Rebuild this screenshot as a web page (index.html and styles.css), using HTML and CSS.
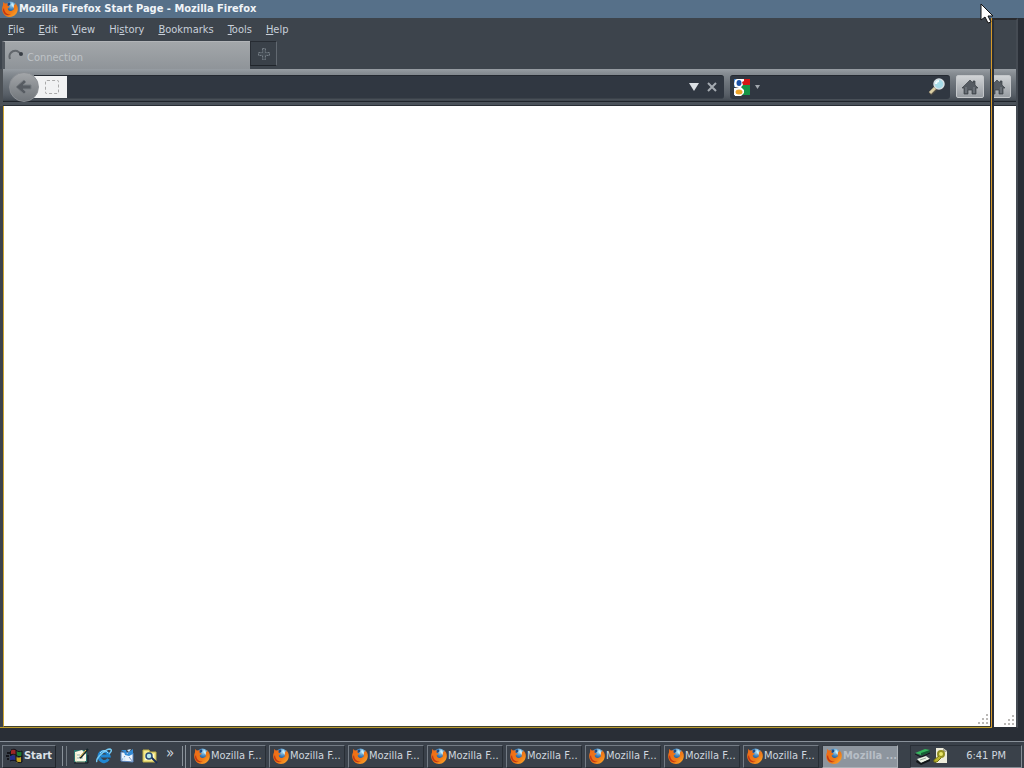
FILE: index.html
```html
<!DOCTYPE html>
<html lang="en">
<head>
  <meta charset="UTF-8">
  <title>Mozilla Firefox Start Page - Mozilla Firefox</title>
  <meta name="viewport" content="width=device-width,initial-scale=1">
  <link rel="stylesheet" href="styles.css">
</head>
<body>
  <svg class="defs" aria-hidden="true">
    <defs>
      <radialGradient id="globe" cx=".6" cy=".25" r=".8"><stop offset="0" stop-color="#b5e5f7"/><stop offset=".5" stop-color="#397ebb"/><stop offset="1" stop-color="#142c61"/></radialGradient>
      <linearGradient id="fur" x2="1" y2="1"><stop offset="0" stop-color="#f06a16"/><stop offset=".6" stop-color="#ee7918"/><stop offset="1" stop-color="#ffb02e"/></linearGradient>
      <symbol id="firefox" viewBox="0 0 16 16">
        <circle cx="8.5" cy="6.5" r="6" fill="url(#globe)"/>
        <path d="M6 2c2-1 3 0 2 2L6 5 5 4z" fill="#1c4a86"/>
        <path d="M10 2c2 1 3 3 2 5l-2-2z" fill="#c5ecfa"/>
        <path d="M1.200 1 2.800 2.500l2.800-.2L5.500 4.700l2.400 1.100-2.200 1.400c.2 2 1.500 3 3.400 2.700l2.500-1.200L12 3.500l1.400.8-.7-2.200C15 3.500 16 6 15.800 8.600 15.400 13 12 16 8 16 3.500 16 .2 12.500.2 8.200c0-2 .3-2.600.8-4z" fill="url(#fur)"/>
        <path d="M2 7c.1 4 3 7 6.800 6.500-4.200 2-8-.8-7.800-5z" fill="#c63712"/>
      </symbol>
      <symbol id="home" viewBox="0 0 18 16">
        <path d="M9 1 1 9h2v6h4v-4h4v4h4V9h2l-3-3V2h-2v2z" fill="#555b62" stroke="#3b4046" stroke-width=".7"/>
        <path d="M5 8v6M13 8v6" stroke="#7e848a"/>
      </symbol>
      <symbol id="grip" viewBox="0 0 12 12">
        <path d="M9 1h2v2H9zM5 5h2v2H5zM9 5h2v2H9zM1 9h2v2H1zM5 9h2v2H5zM9 9h2v2H9z" fill="#bbb9b7"/>
      </symbol>
    </defs>
  </svg>

  <header class="titlebar">
    <svg class="icon"><use href="#firefox"/></svg>
    <h1>Mozilla Firefox Start Page - Mozilla Firefox</h1>
  </header>

  <main class="desktop">
    <section class="window">
      <nav class="menu">
        <a href="#"><u>F</u>ile</a>
        <a href="#"><u>E</u>dit</a>
        <a href="#"><u>V</u>iew</a>
        <a href="#">Hi<u>s</u>tory</a>
        <a href="#"><u>B</u>ookmarks</a>
        <a href="#"><u>T</u>ools</a>
        <a href="#"><u>H</u>elp</a>
      </nav>
      <div class="tabs">
        <button class="tab" type="button">
          <svg class="spinner" viewBox="0 0 16 16"><path d="M2 11C0 6 4 2 9 3l3 2" fill="none" stroke="#62676c" stroke-width="2"/><circle cx="13" cy="6" r="2" fill="#383e45"/></svg>
          <span>Connection</span>
        </button>
        <button class="newtab" type="button" aria-label="New tab">
          <svg width="14" height="14" viewBox="0 0 14 14"><path d="M5.500 1.500h3v4h4v3h-4v4h-3v-4h-4v-3h4z" fill="#444c54" stroke="#747d85" stroke-dasharray="2 1"/></svg>
        </button>
      </div>
      <div class="toolbar">
        <button class="back" type="button" aria-label="Back">
          <svg width="18" height="16" viewBox="0 0 18 16"><path d="M1 8 9 1l2 2-3 3h8v4H8l3 3-2 2z" fill="#575c62" stroke="#777c81"/></svg>
        </button>
        <div class="address">
          <span class="identity"><span class="blank"></span></span>
          <input type="text" aria-label="Address">
          <button type="button" aria-label="Show history"><svg width="12" height="12" viewBox="0 0 12 12"><path d="M1 2h10L6 10z" fill="#dce0e4"/></svg></button>
          <button type="button" aria-label="Stop"><svg width="12" height="12" viewBox="0 0 12 12"><path d="m2 2 8 8M10 2l-8 8" stroke="#a5abb1" stroke-width="2"/></svg></button>
        </div>
        <div class="search">
          <button class="engine" type="button" aria-label="Search engine">
            <svg width="17" height="18" viewBox="0 0 17 18">
              <path d="M1 1h9v8H1z" fill="#3b7fcf"/><path d="M9 1h8v6H9z" fill="#d51616"/><path d="M9 7h8v10H9z" fill="#159447"/><path d="M1 10h6v7H1z" fill="#f5f8fb"/>
              <path d="M4 1h7v2L9 4l1 3-2 2 3 3v3l-3 3H2l-1-3 1-3 4-2-4-1-1-3 1-4z" fill="#fff"/>
              <ellipse cx="6" cy="5" rx="2.500" ry="3" fill="#1b52a7"/>
              <ellipse cx="6" cy="14" rx="3.500" ry="2.500" fill="#eda329"/>
            </svg>
            <svg width="5" height="4" viewBox="0 0 5 4"><path d="M0 0h5L2.500 4z" fill="#a2a8ae"/></svg>
          </button>
          <input type="text" aria-label="Search">
          <button type="button" aria-label="Search the web">
            <svg width="18" height="18" viewBox="0 0 18 18"><path d="m2 16 6-6" stroke="#514d45" stroke-width="4"/><path d="m2 15 5-5" stroke="#d9cda3" stroke-width="3"/><circle cx="11" cy="6" r="5" fill="#a5dbe8" stroke="#d7e0e5" stroke-width="1.500"/><path d="M8 6c0-2 1-3 3-3" stroke="#effcff" stroke-width="2" fill="none"/></svg>
          </button>
        </div>
        <button class="home" type="button" aria-label="Home"><svg width="18" height="16"><use href="#home"/></svg></button>
      </div>
      <div class="page"><svg class="grip"><use href="#grip"/></svg></div>
    </section>

    <!-- window underneath, only its right edge shows -->
    <section class="window behind">
      <div class="menu"></div>
      <div class="tabs"></div>
      <div class="toolbar">
        <button class="home" type="button" aria-label="Home"><svg width="18" height="16"><use href="#home"/></svg></button>
      </div>
      <div class="page"><svg class="grip"><use href="#grip"/></svg></div>
    </section>
  </main>

  <footer class="taskbar">
    <button class="start" type="button">
      <svg width="17" height="16" viewBox="0 0 17 16"><path d="M1 4h3v2H1zM0 7h3v2H0zM1 10h2v2H1zM4 3h2v10H4z" fill="#14151a"/><path d="M5 2c2-1 4-1 5 0v5C8 6 7 6 5 7z" fill="#9d2527"/><path d="M11 3c2 1 3 1 5 0v5c-2 1-3 1-5 0z" fill="#1d7b31"/><path d="M4 8c2-1 4-1 5 0v5c-2-1-3-1-5 0z" fill="#242d8c"/><path d="M10 9c2 1 3 1 5 0v5c-2 1-3 1-5 0z" fill="#c4a11f"/><path d="M5 2c2-1 4-1 5 0 2 2 4 2 6 1v11c-2 1-4 1-6-1-2-1-4-1-6 0M10 2v11M4 7c3-1 4-1 6 0 2 2 4 2 6 1" fill="none" stroke="#111217"/></svg>
      Start
    </button>
    <div class="quick">
      <button type="button" aria-label="Show desktop"><svg viewBox="0 0 16 16"><path d="M1 2h13v12H1z" fill="#2b7770"/><path d="M2 4 9 2l4 4v7H2z" fill="#fbf8e6"/><path d="M4 7h3m-3 3h6" stroke="#8db5ae"/><path d="M3 5v9h9" stroke="#e5e3b9" fill="none"/><path d="m7 10 8-9" stroke="#17272d" stroke-width="2"/><path d="m7 9 6-7" stroke="#f0c84b"/><path d="M1 15h14V7" fill="none" stroke="#101d23"/></svg></button>
      <button type="button" aria-label="Internet Explorer"><svg viewBox="0 0 16 16"><path d="M12.500 11C9 16 3 13 3 8s8-7 10 0H5" fill="none" stroke="#2187d2" stroke-width="3"/><path d="M1 14C-1 11 9 1 14 1c3 1 0 4-1 5" fill="none" stroke="#74c8f2" stroke-width="1.500"/><path d="M4 5c2-3 6-3 8 0" stroke="#a3e1ff" fill="none"/></svg></button>
      <button type="button" aria-label="Outlook Express"><svg viewBox="0 0 16 16"><path d="m2 4 12 1v9L2 13z" fill="#edf4fc" stroke="#5783bd"/><path d="m2 13 4-5m8 6-4-5" fill="none" stroke="#7798c8"/><path d="M2 2h5l1 4 3-3 3-2v5l-4 2-4-1-1-3z" fill="#348bd5"/><path d="m8 2 4-1-2 3M4 8l3 3-3 2z" fill="#d2ecff"/></svg></button>
      <button type="button" aria-label="Search files"><svg viewBox="0 0 16 16"><path d="M1 2h6l1 2h6v10H1z" fill="#f5e98b" stroke="#bdae47"/><path d="M3 6h9v6H3z" fill="#fffbd1"/><path d="m9 9 6 6" stroke="#172c55" stroke-width="2"/><circle cx="7" cy="8" r="3" fill="#b9e9eb" stroke="#294c76" stroke-width="1.500"/></svg></button>
      <button class="more" type="button">»</button>
    </div>
    <div class="tasks">
      <button class="task" type="button"><svg class="icon"><use href="#firefox"/></svg>Mozilla F...</button>
      <button class="task" type="button"><svg class="icon"><use href="#firefox"/></svg>Mozilla F...</button>
      <button class="task" type="button"><svg class="icon"><use href="#firefox"/></svg>Mozilla F...</button>
      <button class="task" type="button"><svg class="icon"><use href="#firefox"/></svg>Mozilla F...</button>
      <button class="task" type="button"><svg class="icon"><use href="#firefox"/></svg>Mozilla F...</button>
      <button class="task" type="button"><svg class="icon"><use href="#firefox"/></svg>Mozilla F...</button>
      <button class="task" type="button"><svg class="icon"><use href="#firefox"/></svg>Mozilla F...</button>
      <button class="task" type="button"><svg class="icon"><use href="#firefox"/></svg>Mozilla F...</button>
      <button class="task active" type="button"><svg class="icon"><use href="#firefox"/></svg>Mozilla ...</button>
    </div>
    <div class="tray">
      <svg width="17" height="17" viewBox="0 0 17 17"><path d="m1 5 10-4 5 1-9 5z" fill="#35b45c"/><path d="m7 5 9-3v2L7 8z" fill="#146034"/><path d="m1 6 6 3 9-4" stroke="#11151a" fill="none"/><path d="m3 11 9-3 4 3-9 4z" fill="#edf3e5"/><path d="m3 12 4 3 9-4v2l-9 4-5-3z" fill="#101517"/><path d="m6 12 6-2" stroke="#99aa9e"/></svg>
      <svg width="15" height="16" viewBox="0 0 15 16"><path d="M3 0h7l4 3v12H3z" fill="#eeeddc"/><path d="M10 0v4h4" fill="#aaa79b"/><circle cx="8" cy="6" r="3" fill="#e9e66a" stroke="#939022" stroke-width="2"/><path d="m6 8-5 4v2h3l4-4" fill="#bbb52d" stroke="#767516"/></svg>
      <time>6:41 PM</time>
    </div>
  </footer>

  <svg class="cursor" viewBox="0 0 13 21"><path d="M1 1v16l4-3 3 6 3-1-3-6h5z" fill="#fff" stroke="#111"/></svg>
</body>
</html>
```

FILE: styles.css
```css
* { box-sizing: border-box; }
body { margin: 0; height: 100vh; display: flex; flex-direction: column; overflow: hidden; background: #292e36; color: #d0d7df; font: 11px/14px "DejaVu Sans Condensed", "DejaVu Sans", Tahoma, sans-serif; }
button { display: flex; align-items: center; justify-content: center; padding: 0; border: 0; background: none; color: inherit; font: inherit; flex-shrink: 0; }
input { flex: 1; min-width: 0; height: 100%; border: 0; background: none; color: #d0d7df; font: inherit; outline: 0; }
svg { display: block; flex-shrink: 0; }
.defs { position: absolute; width: 0; height: 0; }
.icon { width: 16px; height: 16px; }

.titlebar { display: flex; align-items: center; gap: 1px; height: 18px; padding-left: 2px; background: #567089; color: #f0f4f8; flex-shrink: 0; }
.titlebar h1 { margin: 0; font-size: 11px; font-weight: bold; }

.desktop { flex: 1; min-height: 0; display: flex; padding-right: 6px; }
.window { flex: 1; min-width: 0; display: flex; flex-direction: column; background: #3b424a; border-right: 1px solid #d79a28; border-bottom: 1px solid #bd9c2c; }
.menu { display: flex; align-items: center; gap: 14px; height: 23px; padding-left: 8px; background: #3d444c; }
.menu a { color: #c8d0da; text-decoration: none; }
.tabs { display: flex; align-items: flex-start; height: 28px; padding-left: 2px; background: #3d444c; }
.tab { justify-content: flex-start; gap: 3px; width: 248px; height: 28px; padding: 0 8px 0 3px; background: linear-gradient(#a3a7aa, #8f9499); border: 1px solid #b2b5b8; border-width: 1px 0 0 1px; border-left: 3px solid #50565d; color: #bfc3c7; }
.tab span { padding-top: 4px; }
.spinner { width: 16px; height: 16px; }
.newtab { width: 27px; height: 25px; background: #3a4149; border: 1px solid #272c33; border-right-color: #626971; border-bottom-color: #20252b; }

.toolbar { display: flex; align-items: center; height: 37px; padding: 0 6px 2px 9px; background: linear-gradient(#979da3, #868c92 12%, #6f767d 35%, #575e66 70%, #454c54 85%, #20252b 86%, #20252b 89%, #4b525a 90%, #4b525a 96%, #292e35 97%); border-left: 3px solid #4b5055; border-right: 1px solid #292b2e; }
.back { width: 30px; height: 30px; margin-left: -3px; border-radius: 50%; background: linear-gradient(#a3a6a9, #71767b); border: 1px solid #8b8f94; z-index: 1; }
.address { flex: 1; display: flex; align-items: center; height: 24px; margin-left: -5px; background: #303741; border-top: 1px solid #242931; border-bottom: 1px solid #3b424a; border-radius: 0 3px 3px 0; gap: 6px; padding-right: 6px; }
.identity { width: 33px; height: 22px; background: #f1f2f3; display: flex; align-items: center; justify-content: flex-end; padding-right: 8px; }
.blank { width: 14px; height: 14px; border: 1px dashed #aaa; border-radius: 2px; }
.search { display: flex; align-items: center; width: 220px; height: 24px; margin-left: 6px; padding: 0 4px 0 3px; background: #303741; border-top: 1px solid #242931; border-radius: 3px; }
.engine { gap: 5px; }
.home { width: 28px; height: 23px; margin-left: 6px; border: 1px solid #c4c7ca; border-radius: 2px; background: linear-gradient(#d0d3d6, #989da2); }
.page { flex: 1; display: flex; align-items: flex-end; justify-content: flex-end; padding: 0 1px 1px 0; background: #fff; border-left: 1px solid #cda634; border-right: 1px solid #292b2e; border-bottom: 1px solid #42412f; margin-left: 3px; }
.grip { width: 12px; height: 12px; }

.behind { flex: 0 0 26px; border-left: 2px solid #292e36; border-right: 2px solid #454b53; border-bottom-color: #292e36; border-top: 2px solid #292a2e; overflow: hidden; }
.behind .menu { height: 21px; }
.behind .toolbar { justify-content: flex-end; border: 0; padding: 0 5px 2px 0; overflow: hidden; }
.behind .page { margin: 0; border: 0; }

.taskbar { display: flex; align-items: center; height: 27px; margin-top: 13px; padding: 2px 2px 0; background: #3a414a; border-top: 1px solid #89919a; flex-shrink: 0; }
.start { width: 54px; height: 23px; gap: 1px; border: 1px solid #747c85; border-right-color: #20252b; border-bottom-color: #20252b; font-weight: bold; color: #dce2e8; }
.quick { display: flex; align-items: center; gap: 7px; height: 20px; margin-left: 6px; padding: 0 3px 0 10px; border-left: 1px solid #8a929a; border-right: 1px solid #8a929a; box-shadow: inset 3px 0 #3a414a, inset 4px 0 #737b83; width: 121px; }
.quick svg { width: 16px; height: 16px; }
.more { font-size: 15px; padding-bottom: 6px; margin-left: 1px; }
.tasks { flex: 1; min-width: 0; display: flex; gap: 3px; margin-left: 2px; padding-left: 4px; border-left: 1px solid #8a929a; }
.task { width: 76px; height: 23px; gap: 1px; justify-content: flex-start; padding-left: 3px; border: 1px solid #747c85; border-right-color: #272d34; border-bottom-color: #272d34; white-space: nowrap; overflow: hidden; }
.task.active { background: #8d959e; border-color: #343a42 #abb1b7 #abb1b7 #343a42; color: #b7bec6; font-weight: bold; }
.tray { display: flex; align-items: center; gap: 2px; width: 112px; height: 23px; padding: 0 15px 0 3px; border: 1px solid #292f37; border-right-color: #858c94; border-bottom-color: #858c94; }
.tray time { margin-left: auto; }

/* pointer floats over the title bar */
.cursor { position: absolute; right: 31px; top: 3px; width: 13px; height: 21px; }
```
